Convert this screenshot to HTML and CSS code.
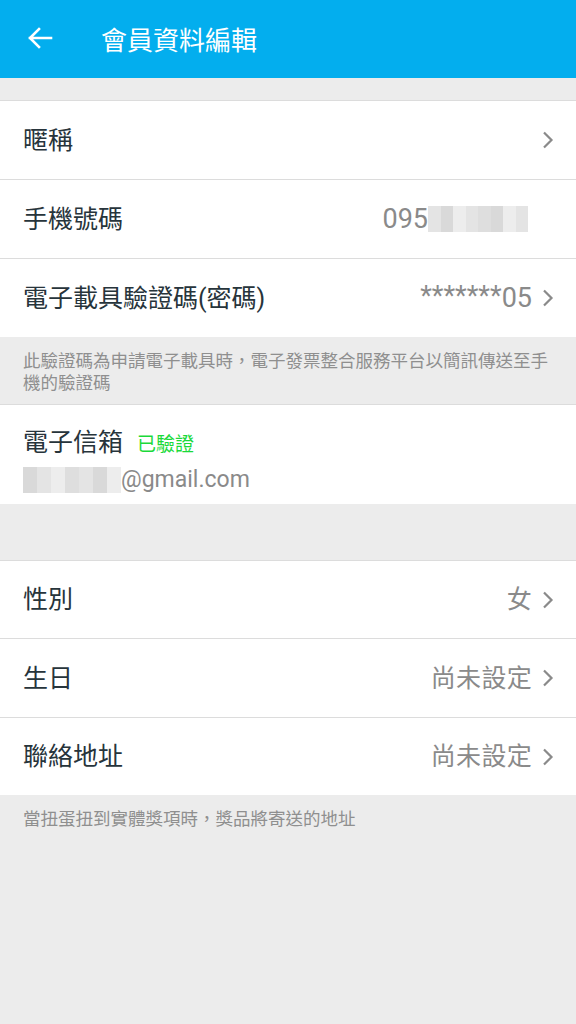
FILE: index.html
```html
<!DOCTYPE html>
<html lang="zh-Hant">
<head>
<meta charset="utf-8">
<link rel="stylesheet" href="styles.css">
</head>
<body>
<header class="appbar">
  <svg class="back" width="26" height="22" viewBox="0 0 26 22"><path d="M24 11H3M12 2L3 11l9 9" fill="none" stroke="#fff" stroke-width="2.6" stroke-linecap="square"/></svg>
  <h1 class="title">會員資料編輯</h1>
</header>
<div class="gap small"></div>
<section class="group">
  <div class="row"><span class="label">暱稱</span><span class="value"></span><svg class="chev" width="12" height="18" viewBox="0 0 12 18"><path d="M2 1.5l7.5 7.5-7.5 7.5" fill="none" stroke="#8a8a8a" stroke-width="2.2"/></svg></div>
  <div class="row"><span class="label">手機號碼</span><span class="value num">095<span class="blur phone"><i class="b1"></i><i class="b2"></i><i class="b3"></i><i class="b1"></i><i class="b4"></i><i class="b2"></i><i class="b3"></i><i class="b1"></i></span></span><span class="chev-space"></span></div>
  <div class="row last"><span class="label">電子載具驗證碼(密碼)</span><span class="value num"><span class="stars">*******</span>05</span><svg class="chev" width="12" height="18" viewBox="0 0 12 18"><path d="M2 1.5l7.5 7.5-7.5 7.5" fill="none" stroke="#8a8a8a" stroke-width="2.2"/></svg></div>
</section>
<p class="note boxed">此驗證碼為申請電子載具時，電子發票整合服務平台以簡訊傳送至手機的驗證碼</p>
<section class="group email">
  <div class="email-head"><span class="label">電子信箱</span><span class="verified">已驗證</span></div>
  <div class="email-addr"><span class="blur mail"><i class="b2"></i><i class="b1"></i><i class="b3"></i><i class="b4"></i><i class="b1"></i><i class="b2"></i><i class="b3"></i></span>@gmail.com</div>
</section>
<div class="gap large"></div>
<section class="group">
  <div class="row short"><span class="label">性別</span><span class="value">女</span><svg class="chev" width="12" height="18" viewBox="0 0 12 18"><path d="M2 1.5l7.5 7.5-7.5 7.5" fill="none" stroke="#8a8a8a" stroke-width="2.2"/></svg></div>
  <div class="row"><span class="label">生日</span><span class="value">尚未設定</span><svg class="chev" width="12" height="18" viewBox="0 0 12 18"><path d="M2 1.5l7.5 7.5-7.5 7.5" fill="none" stroke="#8a8a8a" stroke-width="2.2"/></svg></div>
  <div class="row last short"><span class="label">聯絡地址</span><span class="value">尚未設定</span><svg class="chev" width="12" height="18" viewBox="0 0 12 18"><path d="M2 1.5l7.5 7.5-7.5 7.5" fill="none" stroke="#8a8a8a" stroke-width="2.2"/></svg></div>
</section>
<p class="note">當扭蛋扭到實體獎項時，獎品將寄送的地址</p>
</body>
</html>
```

FILE: styles.css
```css
html, body {
  margin: 0;
  padding: 0;
  background: #ececec;
  font-family: Roboto, "Noto Sans CJK TC", sans-serif;
  height: 1024px;
}
.appbar {
  height: 78px;
  background: #03aeee;
  display: flex;
  align-items: center;
  padding-left: 27px;
  box-sizing: border-box;
}
.back { display: block; margin-top: -2px; }
.title {
  margin: -2px 0 0 48px;
  color: #fff;
  font-size: 26px;
  font-weight: 400;
}
.gap.small { height: 22px; border-bottom: 1px solid #dcdcdc; }
.gap.large { height: 56px; border-bottom: 1px solid #dcdcdc; }
.group { background: #fff; }
.row {
  height: 78px;
  display: flex;
  align-items: center;
  padding: 0 23px;
  border-bottom: 1px solid #dcdcdc;
}
.row.short { height: 77px; }
.row.last { border-bottom: none; }
.label {
  color: #27343b;
  font-size: 25px;
  flex: 1;
  line-height: 1;
}
.value {
  color: #8a8a8a;
  font-size: 25px;
  line-height: 1;
  display: flex;
  align-items: center;
  letter-spacing: 0.3px;
}
.value.num { font-size: 27px; letter-spacing: 0; }
.stars { font-size: 27px; margin-top: -3px; }
.chev { margin-left: 10px; margin-right: -1px; display: block; }
.chev-space { width: 25px; }
.blur { display: inline-flex; height: 26px; }
.blur i { display: block; width: 12.5px; height: 26px; }
.blur i.b1 { background: #e4e4e4; }
.blur i.b2 { background: #d9d9d9; }
.blur i.b3 { background: #ededed; }
.blur i.b4 { background: #dedede; }
.blur.mail i { width: 14px; height: 26px; }
.note {
  margin: 0;
  padding: 12px 23px 11px;
  color: #8f8f8f;
  font-size: 17.5px;
  line-height: 22px;
  font-family: "Noto Sans CJK TC", sans-serif;
}
.note.boxed { border-bottom: 1px solid #dcdcdc; }
.email { height: 99px; padding: 0 23px; box-sizing: border-box; }
.email-head { display: flex; align-items: baseline; padding-top: 24px; }
.email-head .label { flex: none; }
.verified {
  color: #1ad93a;
  font-size: 19px;
  margin-left: 14px;
}
.email-addr {
  display: flex;
  align-items: center;
  color: #8a8a8a;
  font-size: 23px;
  margin-top: 10px;
}
```
